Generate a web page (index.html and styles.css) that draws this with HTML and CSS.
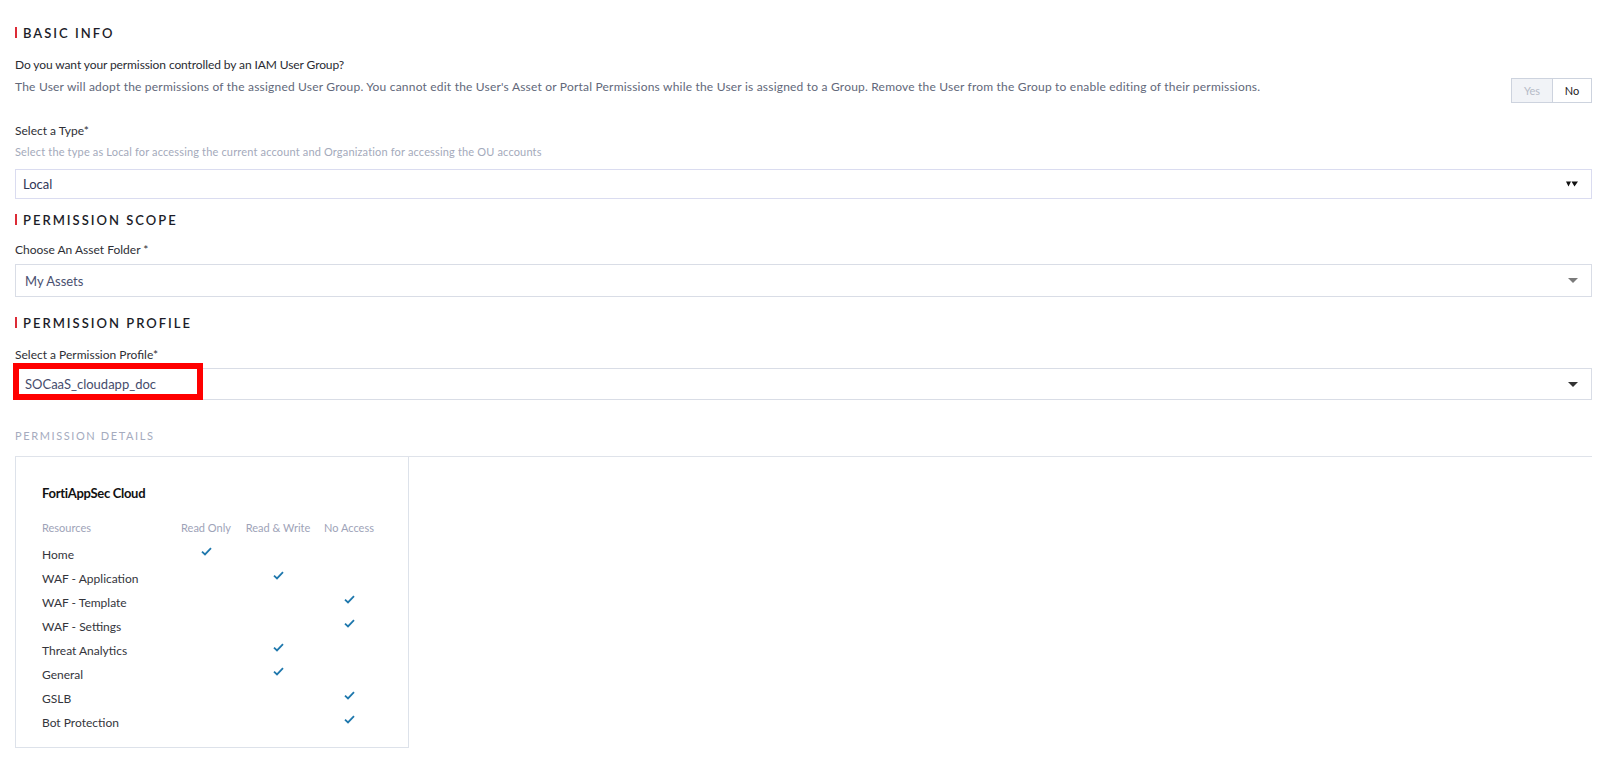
FILE: index.html
```html
<!DOCTYPE html>
<html lang="en">
<head>
	<meta charset="UTF-8">
	<title>User Permissions</title>
	<link rel="stylesheet" href="styles.css">
</head>
<body>
	<div class="page">
		<div class="section-title title-basic">BASIC INFO</div>

		<div class="group-row">
			<div class="group-text">
				<div class="question">Do you want your permission controlled by an IAM User Group?</div>
				<div class="desc">The User will adopt the permissions of the assigned User Group. You cannot edit the User's Asset or Portal Permissions while the User is assigned to a Group. Remove the User from the Group to enable editing of their permissions.</div>
			</div>
			<div class="toggle">
				<span class="toggle-yes">Yes</span>
				<span class="toggle-no">No</span>
			</div>
		</div>

		<div class="label label-type">Select a Type*</div>
		<div class="hint">Select the type as Local for accessing the current account and Organization for accessing the OU accounts</div>
		<div class="select select-type">
			<span>Local</span>
			<svg class="arrow-double" width="12" height="6" viewBox="0 0 12 6">
				<path d="M0 0.5 L5 0.5 L2.5 5.5 Z M5.5 0.5 L12 0.5 L8.5 5.5 Z" fill="#111"/>
			</svg>
		</div>

		<div class="section-title title-scope">PERMISSION SCOPE</div>
		<div class="label label-folder">Choose An Asset Folder *</div>
		<div class="select select-folder">
			<span>My Assets</span>
			<svg class="arrow" width="10" height="5" viewBox="0 0 10 5"><path d="M0 0 L10 0 L5 5 Z" fill="#7a7a7a"/></svg>
		</div>

		<div class="section-title title-profile">PERMISSION PROFILE</div>
		<div class="label label-profile">Select a Permission Profile*</div>
		<div class="select select-profile">
			<span>SOCaaS_cloudapp_doc</span>
			<svg class="arrow" width="10" height="5" viewBox="0 0 10 5"><path d="M0 0 L10 0 L5 5 Z" fill="#333"/></svg>
			<div class="highlight"></div>
		</div>

		<div class="details-title">PERMISSION DETAILS</div>
		<div class="card">
			<div class="card-title">FortiAppSec Cloud</div>
			<div class="perm-grid perm-head">
				<div class="head">Resources</div>
				<div class="head center">Read Only</div>
				<div class="head center">Read &amp; Write</div>
				<div class="head center">No Access</div>
			</div>
			<div class="perm-rows" id="rows"></div>
		</div>
	</div>
	<script>
		var rows = [
			["Home", 0],
			["WAF - Application", 1],
			["WAF - Template", 2],
			["WAF - Settings", 2],
			["Threat Analytics", 1],
			["General", 1],
			["GSLB", 2],
			["Bot Protection", 2]
		];
		var tick = '<svg class="tick" width="11" height="9" viewBox="0 0 11 9"><path d="M1 4.6 L4 7.4 L10 1.2" fill="none" stroke="#1f78ad" stroke-width="1.8"/></svg>';
		var html = "";
		for (var i = 0; i < rows.length; i++) {
			html += '<div class="perm-grid row"><div>' + rows[i][0] + '</div>';
			for (var c = 0; c < 3; c++) {
				html += '<div class="center">' + (rows[i][1] == c ? tick : '') + '</div>';
			}
			html += '</div>';
		}
		document.getElementById("rows").innerHTML = html;
	</script>
</body>
</html>
```
FILE: styles.css
```css
body {
	margin: 0;
	background: #fff;
	font-family: Lato, "Open Sans", sans-serif;
	color: #333;
}

.page {
	padding: 0 22px 0 15px;
}

.section-title {
	position: relative;
	padding-left: 8px;
	height: 14px;
	line-height: 14px;
	font-size: 13px;
	font-weight: 600;
	letter-spacing: 2px;
	color: #1c1d29;
}

.section-title::before {
	content: "";
	position: absolute;
	left: 0;
	top: 1px;
	width: 2px;
	height: 11px;
	background: #dc2b36;
}

.title-basic {
	margin-top: 26px;
}

.title-scope {
	margin-top: 14px;
}

.title-profile {
	margin-top: 19px;
}

.group-row {
	display: flex;
	align-items: flex-start;
	justify-content: space-between;
}

.question {
	margin-top: 17px;
	font-size: 12px;
	line-height: 16px;
	color: #2a2b32;
	letter-spacing: -0.1px;
}

.desc {
	margin-top: 6px;
	font-size: 12px;
	line-height: 16px;
	color: #62687a;
	letter-spacing: 0.2px;
}

.toggle {
	display: flex;
	margin-top: 38px;
	border: 1px solid #cdd3de;
	height: 23px;
}

.toggle span {
	display: flex;
	align-items: center;
	justify-content: center;
	font-size: 11px;
}

.toggle-yes {
	width: 40px;
	background: #f1f3f7;
	color: #b6bbc7;
	border-right: 1px solid #cdd3de;
}

.toggle-no {
	width: 38px;
	color: #222;
}

.label {
	font-size: 12px;
	line-height: 16px;
	color: #2e2f36;
}

.label-type {
	margin-top: 20px;
}

.label-folder {
	margin-top: 15px;
}

.label-profile {
	margin-top: 17px;
}

.hint {
	margin-top: 5px;
	font-size: 11px;
	line-height: 16px;
	color: #a4aabb;
	letter-spacing: 0.16px;
}

.select {
	position: relative;
	display: flex;
	align-items: center;
	justify-content: space-between;
	padding: 0 13px 0 9px;
	border: 1px solid #d9dde6;
	font-size: 13px;
	color: #2f3656;
}

.select-type {
	margin-top: 9px;
	height: 28px;
	border-color: #dadcf0;
	padding-left: 7px;
}

.select-folder {
	margin-top: 6px;
	height: 31px;
	color: #4a5070;
}

.select-profile {
	margin-top: 5px;
	height: 30px;
	color: #464c6c;
}

.highlight {
	position: absolute;
	left: -3px;
	top: -6px;
	width: 178px;
	height: 25px;
	border: 6px solid #f00;
}

.details-title {
	margin-top: 29px;
	padding-bottom: 13px;
	border-bottom: 1px solid #dfe3ea;
	font-size: 11px;
	line-height: 14px;
	letter-spacing: 1.6px;
	color: #a5abbe;
}

.card {
	width: 366px;
	padding: 28px 0 13px 26px;
	border: 1px solid #dde2ea;
	border-top: none;
}

.card-title {
	font-size: 13px;
	font-weight: 700;
	line-height: 16px;
	color: #111;
	letter-spacing: -0.3px;
}

.perm-grid {
	display: grid;
	grid-template-columns: 133px 62px 82px 60px;
	height: 24px;
	align-items: center;
	font-size: 12px;
}

.perm-grid .center {
	display: flex;
	justify-content: center;
}

.perm-grid .head {
	font-size: 11px;
	color: #9ea3b8;
}

.perm-head {
	margin-top: 14px;
	margin-bottom: 3px;
}

.row {
	color: #34353c;
}

.tick {
	display: block;
	margin-top: -5px;
}
```
